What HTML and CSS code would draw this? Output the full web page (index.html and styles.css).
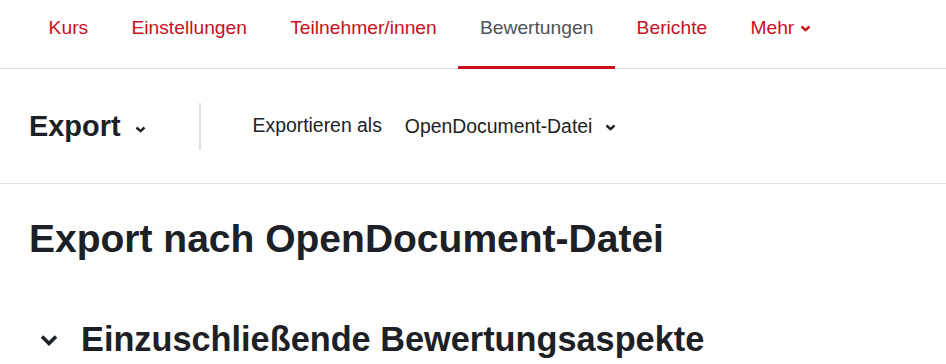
FILE: index.html
```html
<!DOCTYPE html>
<html lang="de">
<head>
<meta charset="utf-8">
<title>Export nach OpenDocument-Datei</title>
<link rel="stylesheet" href="styles.css">
</head>
<body>
<nav class="tabs">
  <a class="tab" href="#">Kurs</a>
  <a class="tab" href="#">Einstellungen</a>
  <a class="tab" href="#">Teilnehmer/innen</a>
  <a class="tab active" href="#">Bewertungen</a>
  <a class="tab" href="#">Berichte</a>
  <a class="tab" href="#">Mehr<svg class="tab-chev" width="11" height="7" viewBox="0 0 11 7"><path d="M1.5 1.5 L5.5 5.2 L9.5 1.5" fill="none" stroke="currentColor" stroke-width="2.4"/></svg></a>
</nav>
<div class="toolbar">
  <div class="tool-title">Export<svg class="title-chev" width="11" height="7" viewBox="0 0 11 7"><path d="M1.5 1.5 L5.5 5.2 L9.5 1.5" fill="none" stroke="currentColor" stroke-width="2.4"/></svg></div>
  <div class="divider"></div>
  <span class="label">Exportieren als</span>
  <div class="select">OpenDocument-Datei<svg class="sel-chev" width="11" height="7" viewBox="0 0 11 7"><path d="M1.5 1.5 L5.5 5.2 L9.5 1.5" fill="none" stroke="currentColor" stroke-width="2.4"/></svg></div>
</div>
<main class="content">
  <h2 class="page-title">Export nach OpenDocument-Datei</h2>
  <div class="section-head">
    <svg class="sec-chev" width="18" height="13" viewBox="0 0 18 13"><path d="M2 2.5 L9 9.5 L16 2.5" fill="none" stroke="currentColor" stroke-width="3.6"/></svg>
    <h3 class="section-title">Einzuschließende Bewertungsaspekte</h3>
  </div>
</main>
</body>
</html>
```
FILE: styles.css
```css
html, body {
  margin: 0;
  padding: 0;
  background: #fff;
  color: #1d2125;
  font-family: "Liberation Sans", Arial, sans-serif;
}
.tabs {
  display: flex;
  height: 68px;
  border-bottom: 1px solid #dee2e6;
  padding-left: 27px;
}
.tab {
  display: flex;
  align-items: center;
  box-sizing: border-box;
  height: 69px;
  padding: 0 21.6px 14px;
  border-top: 3px solid transparent;
  border-bottom: 3px solid transparent;
  color: #ca0f1e;
  text-decoration: none;
  font-size: 19.25px;
}
.tab.active {
  color: #4b525a;
  border-bottom-color: #c8101e;
}
.tab-chev {
  margin-left: 6px;
  margin-top: 2px;
}
.toolbar {
  display: flex;
  align-items: center;
  height: 114px;
  border-bottom: 1px solid #dee2e6;
  padding-left: 29px;
}
.tool-title {
  display: flex;
  align-items: center;
  font-weight: bold;
  font-size: 28.9px;
}
.title-chev {
  margin-left: 14px;
  margin-top: 6px;
}
.divider {
  width: 2px;
  height: 47px;
  background: #dee2e6;
  margin: 0 52px 0 53px;
}
.label {
  font-size: 19.4px;
  margin-top: -2px;
}
.select {
  display: flex;
  align-items: center;
  font-size: 19.4px;
  margin-left: 23px;
}
.sel-chev {
  margin-left: 13px;
  margin-top: 2px;
}
.content {
  padding: 0 29px;
}
.page-title {
  margin: 32px 0 0;
  font-size: 39px;
  line-height: 1.2;
  font-weight: bold;
}
.section-head {
  display: flex;
  align-items: center;
  margin-top: 56px;
}
.sec-chev {
  margin-left: 11px;
  margin-right: 23px;
  margin-top: 2px;
}
.section-title {
  margin: 0;
  font-size: 34.3px;
  line-height: 1.2;
  font-weight: bold;
}
```
